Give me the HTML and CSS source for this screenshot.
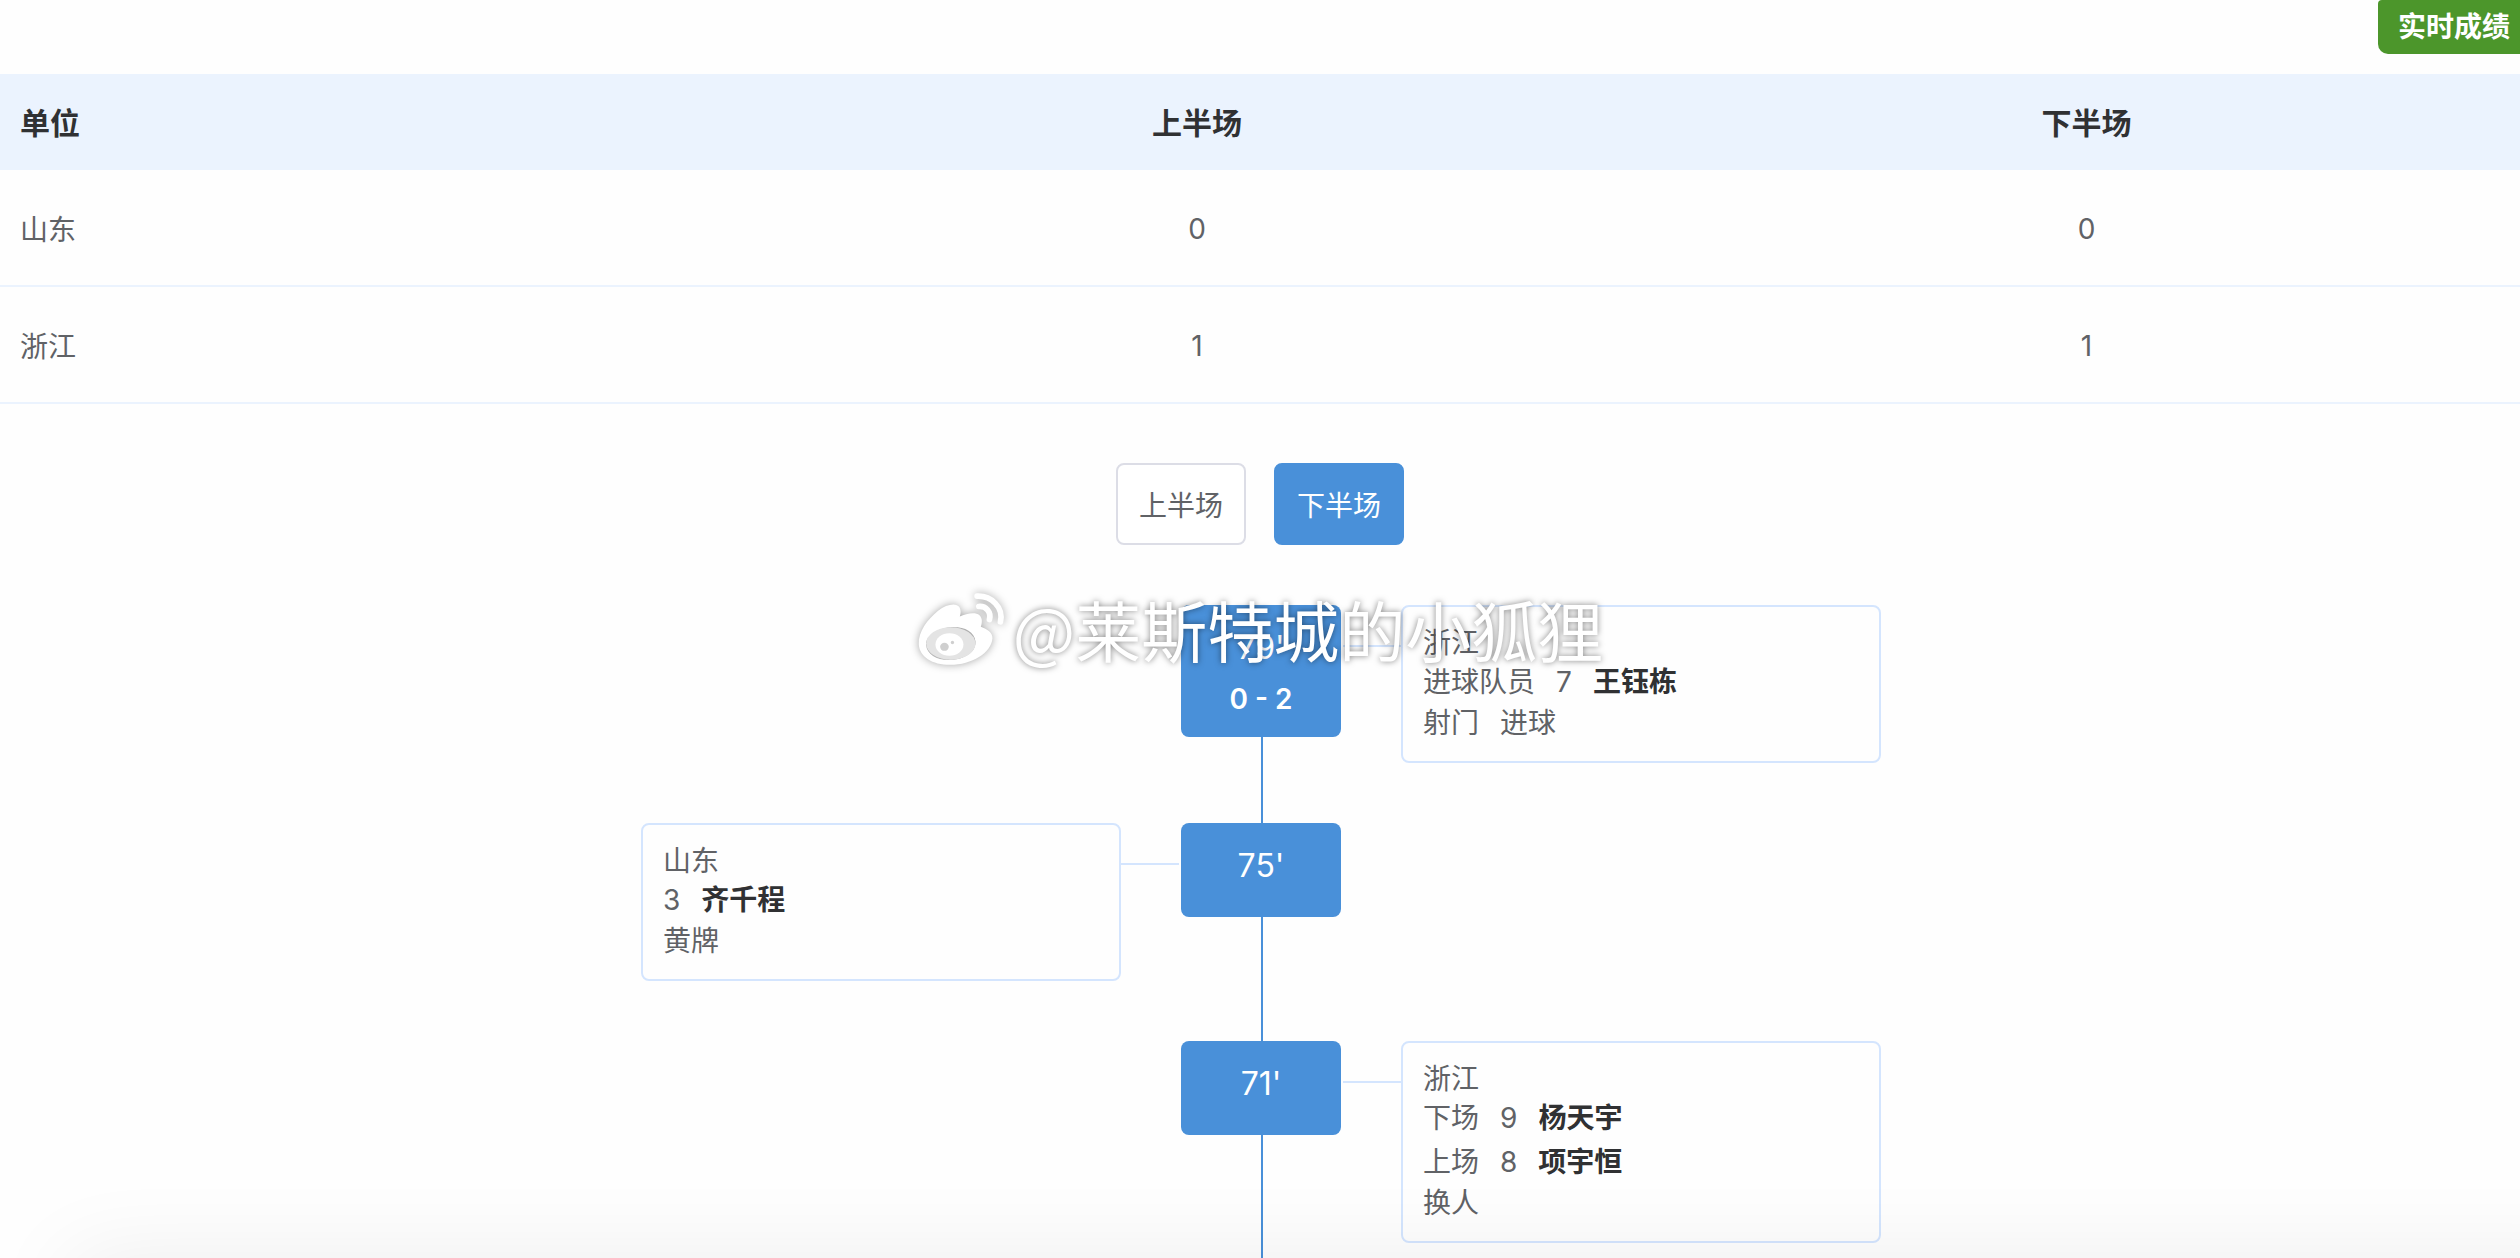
FILE: index.html
```html
<!DOCTYPE html>
<html lang="zh-CN">
<head>
  <meta charset="UTF-8" />
  <meta name="viewport" content="width=device-width, initial-scale=1.0" />
  <title>实时成绩</title>
  <link rel="stylesheet" href="styles.css">
</head>
<body>

<div class="topbar">
  <span class="badge">实时成绩</span>
</div>

<table class="score-table">
  <thead>
    <tr><th class="col-team">单位</th><th class="col-first">上半场</th><th class="col-second">下半场</th></tr>
  </thead>
  <tbody>
    <tr><td>山东</td><td>0</td><td>0</td></tr>
    <tr><td>浙江</td><td>1</td><td>1</td></tr>
  </tbody>
</table>

<div class="tabs">
  <button type="button" class="tab">上半场</button>
  <button type="button" class="tab active">下半场</button>
</div>

<div class="timeline">
  <div class="event right">
    <div class="node">
      <div class="time">79'</div>
      <div class="score">0 - 2</div>
    </div>
    <div class="card">
      <div class="team">浙江</div>
      <div class="player"><span>进球队员</span><span>7</span><strong>王钰栋</strong></div>
      <div class="action"><span>射门</span><span>进球</span></div>
    </div>
  </div>

  <div class="event left">
    <div class="node">
      <div class="time">75'</div>
    </div>
    <div class="card">
      <div class="team">山东</div>
      <div class="player"><span>3</span><strong>齐千程</strong></div>
      <div class="action"><span>黄牌</span></div>
    </div>
  </div>

  <div class="event right">
    <div class="node">
      <div class="time">71'</div>
    </div>
    <div class="card">
      <div class="team">浙江</div>
      <div class="player"><span>下场</span><span>9</span><strong>杨天宇</strong></div>
      <div class="player"><span>上场</span><span>8</span><strong>项宇恒</strong></div>
      <div class="action"><span>换人</span></div>
    </div>
  </div>
</div>

<div class="watermark">
  <svg class="watermark-logo" viewBox="76 60 270 230" aria-hidden="true">
    <path fill="#fff" fill-rule="evenodd" d="M82 222 C80 185 108 148 140 122 C165 102 194 97 204 111 C209 120 208 130 205 139 C225 130 251 124 264 135 C274 145 272 158 268 170 C287 177 304 188 303 205 C299 248 242 284 176 284 C122 284 84 259 82 222 Z M104 225 C107 253 138 272 180 269 C224 266 255 242 252 213 C249 184 216 168 177 171 C135 175 102 198 104 225 Z"/>
    <ellipse cx="178" cy="220" rx="74" ry="49" fill="#e4e4e4"/>
    <ellipse cx="174" cy="223" rx="42" ry="34" fill="#fff"/>
    <ellipse cx="159" cy="230" rx="13" ry="12" fill="#cfcfcf"/>
    <circle cx="183" cy="217" r="5" fill="#cfcfcf"/>
    <path class="wave" d="M257 78 C300 76 337 112 327 155"/>
    <path class="wave" d="M262 109 C283 107 300 125 294 148"/>
  </svg>
  <span>@莱斯特城的小狐狸</span>
</div>

<div class="bottom-shadow"></div>

</body>
</html>
```

FILE: styles.css
```css
:root {
  --primary: #4990d9;
  --head-bg: #ebf3fe;
  --line: #d4e5fe;
  --title: #303133;
  --text: #606266;
}
* { box-sizing: border-box; }

body {
  margin: 0;
  background: #fefefe;
  color: var(--text);
  font-family: Inter, "Noto Sans CJK SC", sans-serif;
  font-size: 28px;
  height: 100vh;
  overflow: hidden;
}

.topbar {
  display: flex;
  justify-content: flex-end;
  padding-bottom: 20px;
}

.badge {
  padding: 0 10px 0 20px;
  line-height: 54px;
  font-weight: 600;
  color: #fff;
  background: #4c962b;
  border-radius: 4px 0 0 10px;
}

.score-table {
  width: 100%;
  table-layout: fixed;
  border-collapse: separate;
  border-spacing: 0;
}

.score-table th {
  height: 96px;
  padding: 0 20px 2px;
  font-size: 30px;
  font-weight: 600;
  color: var(--title);
  background: var(--head-bg);
}

.score-table td {
  height: 117px;
  padding: 2px 20px 0;
  text-align: center;
  border-bottom: 2px solid var(--head-bg);
}

.score-table td:first-child { padding-top: 0; }

.score-table th:first-child,
.score-table td:first-child { text-align: left; }

.col-team { width: 29.4%; }
.col-first { width: 36.2%; }

.tabs {
  display: flex;
  justify-content: center;
  gap: 28px;
  padding: 59px 0 60px;
}

.tab {
  width: 130px;
  height: 82px;
  padding: 0;
  font: inherit;
  color: var(--text);
  background: #fff;
  border: 2px solid #dcdde6;
  border-radius: 8px;
}

.tab.active {
  color: #fff;
  background: var(--primary);
  border-color: var(--primary);
}

.timeline {
  width: 1242px;
  margin: 0 auto;
  padding-left: 2px;
}

/* card | gap | node | gap | card */
.event {
  display: grid;
  grid-template-columns: 480px 160px 480px;
  column-gap: 60px;
  align-items: start;
  position: relative;
  padding-bottom: 60px;
}

.event::before {
  content: "";
  position: absolute;
  top: 0;
  bottom: 0;
  left: 50%;
  width: 2px;
  background: var(--primary);
}

.node {
  grid-column: 2;
  grid-row: 1;
  position: relative;
  min-height: 94px;
  padding: 20px 0 10px;
  text-align: center;
  color: #fff;
  background: var(--primary);
  border-radius: 8px;
}

.time {
  font-size: 32px;
  line-height: 46px;
}

.score {
  line-height: 56px;
  font-weight: 600;
}

.card {
  grid-row: 1;
  position: relative;
  padding: 19px 20px;
  border: 2px solid var(--line);
  border-radius: 8px;
}

.right .card { grid-column: 3; }
.left .card { grid-column: 1; }

.card::before {
  content: "";
  position: absolute;
  top: 38px;
  width: 60px;
  height: 2px;
  background: var(--line);
}

.right .card::before { right: 100%; }
.left .card::before { left: 100%; }

.team { line-height: 34px; }

.player,
.action {
  display: flex;
  gap: 21px;
  line-height: 44px;
}

.action { line-height: 38px; }

.player strong {
  font-weight: 600;
  color: var(--title);
}

.watermark {
  position: absolute;
  top: 588px;
  left: 50%;
  transform: translateX(-50%);
  display: flex;
  align-items: center;
  gap: 6px;
  color: #fff;
  font-family: "Noto Sans CJK SC", sans-serif;
  font-size: 66px;
  line-height: 80px;
  white-space: nowrap;
  text-shadow: 0 0 6px rgba(0, 0, 0, 0.5);
}

.watermark-logo {
  width: 90px;
  height: 77px;
  overflow: visible;
  filter: drop-shadow(0 0 4px rgba(0, 0, 0, 0.35));
}

.wave {
  fill: none;
  stroke: #fff;
  stroke-width: 17;
  stroke-linecap: round;
}

.bottom-shadow {
  position: fixed;
  top: 100%;
  left: 70px;
  right: -100px;
  height: 100px;
  box-shadow: 0 0 90px rgba(0, 0, 0, 0.07);
}
```
